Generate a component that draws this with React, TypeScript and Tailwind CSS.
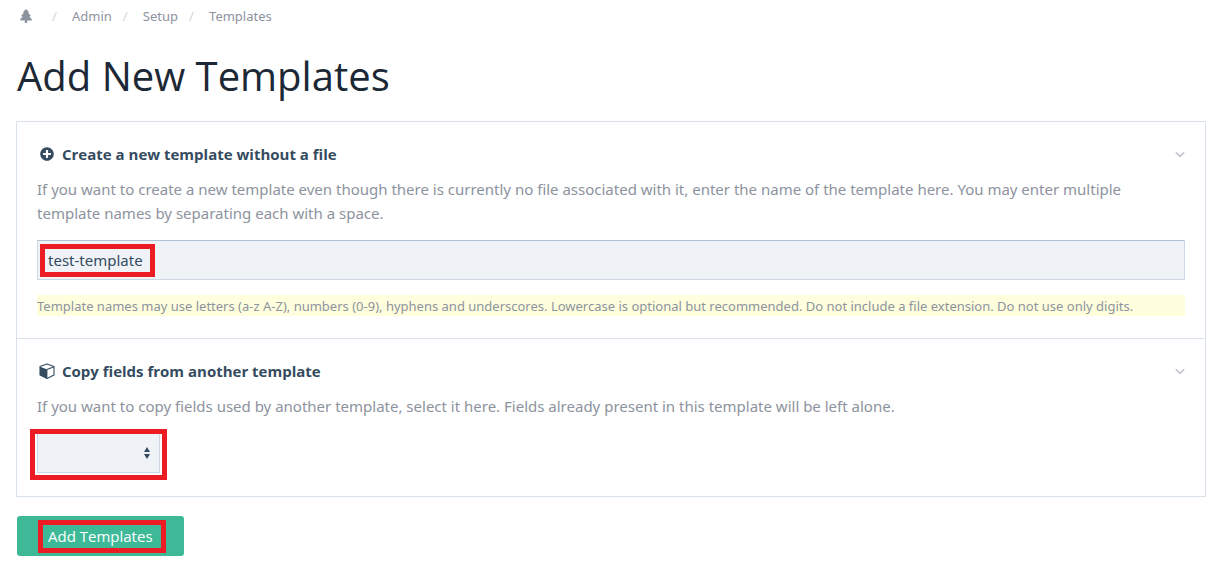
import { useState, type ReactNode } from "react";
import { FaPlusCircle } from "react-icons/fa";

function TreeIcon() {
  return (
    <svg viewBox="0 0 12 14" className="h-3.5 w-3" aria-hidden="true">
      <path
        d="M6 0 9 3 8.6 3.8H8L10.6 6.6 10.2 7.4H9.2L12 10.6 11.6 11.6H7.2V14H4.8V11.6H0.4L0 10.6 2.8 7.4H1.8L1.4 6.6 4 3.8H3.4L3 3Z"
        fill="currentColor"
      />
    </svg>
  );
}

function CubeIcon() {
  return (
    <svg viewBox="0 0 16 16" className="h-4 w-4" aria-hidden="true">
      <path
        d="M8 1 15 3.6V12L8 15.4 1 12V3.6Z"
        fill="none"
        stroke="currentColor"
        strokeWidth="1.1"
        strokeLinejoin="round"
      />
      <path d="M1 3.8 8.4 6.4V15.4L1 12Z" fill="currentColor" />
      <path d="M8 6.4 15 3.8" fill="none" stroke="currentColor" strokeWidth="1.1" />
    </svg>
  );
}

function ChevronIcon() {
  return (
    <svg viewBox="0 0 10 8" className="h-2 w-2.5" aria-hidden="true">
      <path d="M0.8 2.3 5 6.3 9.2 2.3" fill="none" stroke="currentColor" strokeWidth="1.6" />
    </svg>
  );
}

function SorterIcon() {
  return (
    <svg viewBox="0 0 6 12" className="h-3 w-1.5" aria-hidden="true">
      <path d="M3 0 6 5H0ZM3 12 6 7H0Z" fill="currentColor" />
    </svg>
  );
}

function Highlight({ className }: { className: string }) {
  return (
    <span
      aria-hidden="true"
      className={`pointer-events-none absolute border-5 border-[#ed1c24] ${className}`}
    />
  );
}

function Panel({
  id,
  icon,
  title,
  children,
}: {
  id: string;
  icon: ReactNode;
  title: string;
  children: ReactNode;
}) {
  const [open, setOpen] = useState(true);
  return (
    <section className="px-5 pt-5 pb-[22px]">
      <h2 className="font-['Open_Sans','Noto_Sans',sans-serif] text-[15px] leading-6 font-bold text-[#354b60]">
        <button
          type="button"
          aria-expanded={open}
          aria-controls={`${id}-content`}
          onClick={() => setOpen(!open)}
          className="flex w-full items-center text-left"
        >
          <span className="flex w-5 justify-center">{icon}</span>
          <span id={`${id}-title`} className="ml-[5px] flex-1">
            {title}
          </span>
          <span className="text-[#c3c6ce]">
            <ChevronIcon />
          </span>
        </button>
      </h2>
      <div id={`${id}-content`} hidden={!open} className="pt-[11px]">
        {children}
      </div>
    </section>
  );
}

const crumbs = ["Admin", "Setup", "Templates"];

export default function App() {
  const [name, setName] = useState("test-template");
  return (
    <main className="bg-white pr-[22px] pl-4 font-['Noto_Sans','Open_Sans',sans-serif] text-[15px] leading-6 text-[#8d939e]">
      <nav aria-label="Breadcrumb" className="pt-1.5">
        <ol className="flex items-center text-[13px] leading-5">
          <li className="pr-[9px] pl-1">
            <a href="#tree" aria-label="Tree" className="block">
              <TreeIcon />
            </a>
          </li>
          {crumbs.map((crumb) => (
            <li key={crumb} className="flex">
              <span aria-hidden="true" className="w-[31px] pl-[11px] text-[#d3d5da]">
                /
              </span>
              <a href={`#${crumb.toLowerCase()}`}>{crumb}</a>
            </li>
          ))}
        </ol>
      </nav>

      <h1 className="pt-[26px] pl-px font-['Open_Sans','Noto_Sans',sans-serif] text-[40px] leading-12 font-normal text-[#1c2836]">
        Add New Templates
      </h1>

      <form onSubmit={(event) => event.preventDefault()}>
        <div className="mt-[21px] divide-y divide-[#d9e1ea] border border-[#d9e1ea] pb-px">
          <Panel
            id="create"
            icon={<FaPlusCircle className="h-3.5 w-3.5" />}
            title="Create a new template without a file"
          >
            <p>
              If you want to create a new template even though there is currently no file associated
              with it, enter the name of the template here. You may enter multiple template names by
              separating each with a space.
            </p>
            <div className="relative mt-[15px]">
              <input
                type="text"
                aria-labelledby="create-title"
                aria-describedby="create-note"
                value={name}
                onChange={(event) => setName(event.target.value)}
                className="block h-10 w-full border border-[#cdd8e4] border-t-[#b2c3d6] bg-[#eff3f8] px-2.5 text-[#354b60] outline-none"
              />
              <Highlight className="top-1 left-[3px] h-[33px] w-[115px]" />
            </div>
            <p id="create-note" className="mt-[15px] bg-[#ffffdd] pt-px text-[13px] leading-5">
              Template names may use letters (a-z A-Z), numbers (0-9), hyphens and underscores.
              Lowercase is optional but recommended. Do not include a file extension. Do not use
              only digits.
            </p>
          </Panel>

          <Panel id="copy" icon={<CubeIcon />} title="Copy fields from another template">
            <p>
              If you want to copy fields used by another template, select it here. Fields already
              present in this template will be left alone.
            </p>
            <div className="relative mt-[15px] flex w-[123px] items-center text-[#354b60]">
              <select
                aria-labelledby="copy-title"
                className="h-10 w-full appearance-none border border-[#cdd8e4] border-t-[#b2c3d6] bg-[#eff3f8] px-2.5 outline-none"
              >
                <option value=""></option>
              </select>
              <span className="pointer-events-none absolute right-2.5">
                <SorterIcon />
              </span>
              <Highlight className="-top-1 -left-[7px] h-[51px] w-[137px]" />
            </div>
          </Panel>
        </div>

        <button
          type="submit"
          className="relative mt-[19px] ml-px h-10 rounded-[3px] bg-[#3eb998] px-[31px] font-['Open_Sans','Noto_Sans',sans-serif] text-white"
        >
          Add Templates
          <Highlight className="top-1 left-[21px] h-[33px] w-32" />
        </button>
      </form>
    </main>
  );
}
